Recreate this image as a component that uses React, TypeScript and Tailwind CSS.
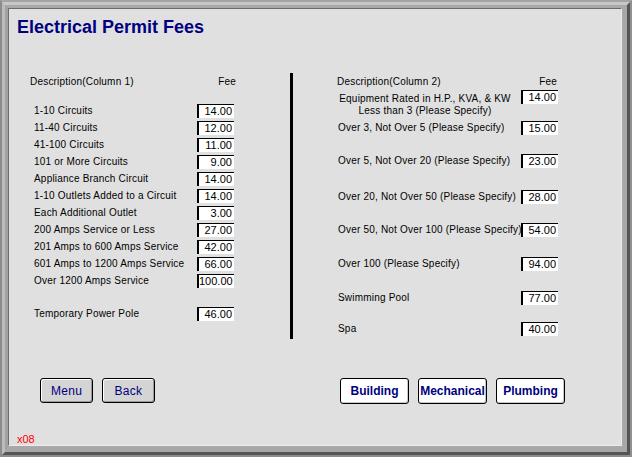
import type { FC } from 'react';

interface FeeRow {
  label: string;
  fee: string;
  gap: string;
}

const leftRows: FeeRow[] = [
  { label: '1-10 Circuits', fee: '14.00', gap: 'mt-[15px]' },
  { label: '11-40 Circuits', fee: '12.00', gap: 'mt-[3px]' },
  { label: '41-100 Circuits', fee: '11.00', gap: 'mt-[3px]' },
  { label: '101 or More Circuits', fee: '9.00', gap: 'mt-[3px]' },
  { label: 'Appliance Branch Circuit', fee: '14.00', gap: 'mt-[3px]' },
  { label: '1-10 Outlets Added to a Circuit', fee: '14.00', gap: 'mt-[3px]' },
  { label: 'Each Additional Outlet', fee: '3.00', gap: 'mt-[3px]' },
  { label: '200 Amps Service or Less', fee: '27.00', gap: 'mt-[3px]' },
  { label: '201 Amps to 600 Amps Service', fee: '42.00', gap: 'mt-[3px]' },
  { label: '601 Amps to 1200 Amps Service', fee: '66.00', gap: 'mt-[3px]' },
  { label: 'Over 1200 Amps Service', fee: '100.00', gap: 'mt-[3px]' },
  { label: 'Temporary Power Pole', fee: '46.00', gap: 'mt-[19px]' },
];

const rightRows: FeeRow[] = [
  { label: 'Over 3, Not Over 5 (Please Specify)', fee: '15.00', gap: 'mt-[4px]' },
  { label: 'Over 5, Not Over 20 (Please Specify)', fee: '23.00', gap: 'mt-[19px]' },
  { label: 'Over 20, Not Over 50 (Please Specify)', fee: '28.00', gap: 'mt-[22px]' },
  { label: 'Over 50, Not Over 100 (Please Specify)', fee: '54.00', gap: 'mt-[19px]' },
  { label: 'Over 100 (Please Specify)', fee: '94.00', gap: 'mt-[20px]' },
  { label: 'Swimming Pool', fee: '77.00', gap: 'mt-[20px]' },
  { label: 'Spa', fee: '40.00', gap: 'mt-[17px]' },
];

const FeeBox: FC<{ value: string; className?: string }> = ({ value, className = '' }) => (
  <div
    className={`h-[14px] w-[37px] shrink-0 border-t border-l-2 border-black bg-white pr-[2px] text-right text-[11px] leading-[13px] tracking-normal text-black ${className}`}
  >
    {value}
  </div>
);

const GrayButton: FC<{ label: string; className?: string }> = ({ label, className = '' }) => (
  <button
    type="button"
    className={`h-[25px] w-[53px] rounded-[3px] border border-black bg-[#d4d4d4] text-[12px] tracking-[0.3px] text-[#000080] shadow-[inset_1px_1px_0_#ffffff,inset_-1px_-1px_0_#9a9a9a] ${className}`}
  >
    {label}
  </button>
);

const WhiteButton: FC<{ label: string; className?: string }> = ({ label, className = '' }) => (
  <button
    type="button"
    className={`h-[26px] w-[69px] rounded-[3px] border border-black bg-white text-[12px] font-bold text-[#000080] shadow-[inset_-1px_-1px_0_#c8c8c8] ${className}`}
  >
    {label}
  </button>
);

const App: FC = () => {
  return (
    <div className="h-[457px] w-[632px] border-2 border-t-[#a4a4a4] border-l-[#8c8c8c] border-r-[#909090] border-b-[#8c8c8c] font-['Liberation_Sans',Arial,sans-serif]">
      <div className="h-full w-full border-[3px] border-t-[#c8c8c8] border-l-[#bcbcbc] border-r-[#555555] border-b-[#555555]">
        <div className="h-full w-full border-t-[3px] border-l-[3px] border-r-[5px] border-b-[6px] border-t-[#a9a9a9] border-l-[#a2a2a2] border-r-[#a8a8a8] border-b-[#a8a8a8]">
          <div className="flex h-full w-full flex-col border border-t-[#6c6c6c] border-l-[#6c6c6c] border-r-[#ececec] border-b-[#ececec] bg-[#e0e0e0]">
            <h1 className="ml-[8px] mt-[7px] text-[18px] font-bold leading-[22px] text-[#000080]">
              Electrical Permit Fees
            </h1>

            <div className="mt-[35px] flex">
              {/* column 1 */}
              <div className="ml-[21px] flex w-[206px] flex-col text-[10px] leading-[12px] tracking-[0.2px] text-black">
                <div className="mt-[2px] flex h-[14px] items-center justify-between">
                  <span>Description(Column 1)</span>
                  <span>Fee</span>
                </div>
                {leftRows.map((row, index) => (
                  <div key={index} className={`flex h-[14px] items-center ${row.gap}`}>
                    <span className="min-w-0 flex-1 whitespace-nowrap pl-[4px]">{row.label}</span>
                    <FeeBox value={row.fee} className="mr-[2px]" />
                  </div>
                ))}
              </div>

              <div className="ml-[54px] h-[266px] w-[3px] bg-black" />

              {/* column 2 */}
              <div className="ml-[44px] flex w-[221px] flex-col text-[10px] leading-[12px] tracking-[0.2px] text-black">
                <div className="mt-[2px] flex h-[14px] items-center justify-between">
                  <span>Description(Column 2)</span>
                  <span className="pr-[1px]">Fee</span>
                </div>
                <div className="mt-[1px] flex items-start">
                  <div className="min-w-0 flex-1 whitespace-nowrap pt-[3px] text-center">
                    <div className="w-[176px]">Equipment Rated in H.P., KVA, &amp; KW</div>
                    <div className="w-[176px]">Less than 3 (Please Specify)</div>
                  </div>
                  <FeeBox value="14.00" />
                </div>
                {rightRows.map((row, index) => (
                  <div key={index} className={`flex h-[14px] items-center ${row.gap}`}>
                    <span className="min-w-0 flex-1 whitespace-nowrap pl-[1px]">{row.label}</span>
                    <FeeBox value={row.fee} />
                  </div>
                ))}
              </div>
            </div>

            <div className="mt-[39px] flex items-start">
              <GrayButton label="Menu" className="ml-[31px]" />
              <GrayButton label="Back" className="ml-[9px]" />
              <WhiteButton label="Building" className="ml-[185px]" />
              <WhiteButton label="Mechanical" className="ml-[9px]" />
              <WhiteButton label="Plumbing" className="ml-[9px]" />
            </div>

            <div className="ml-[8px] mt-[30px] text-[11px] leading-[11px] text-[#ff0000]">x08</div>
          </div>
        </div>
      </div>
    </div>
  );
};

export default App;
